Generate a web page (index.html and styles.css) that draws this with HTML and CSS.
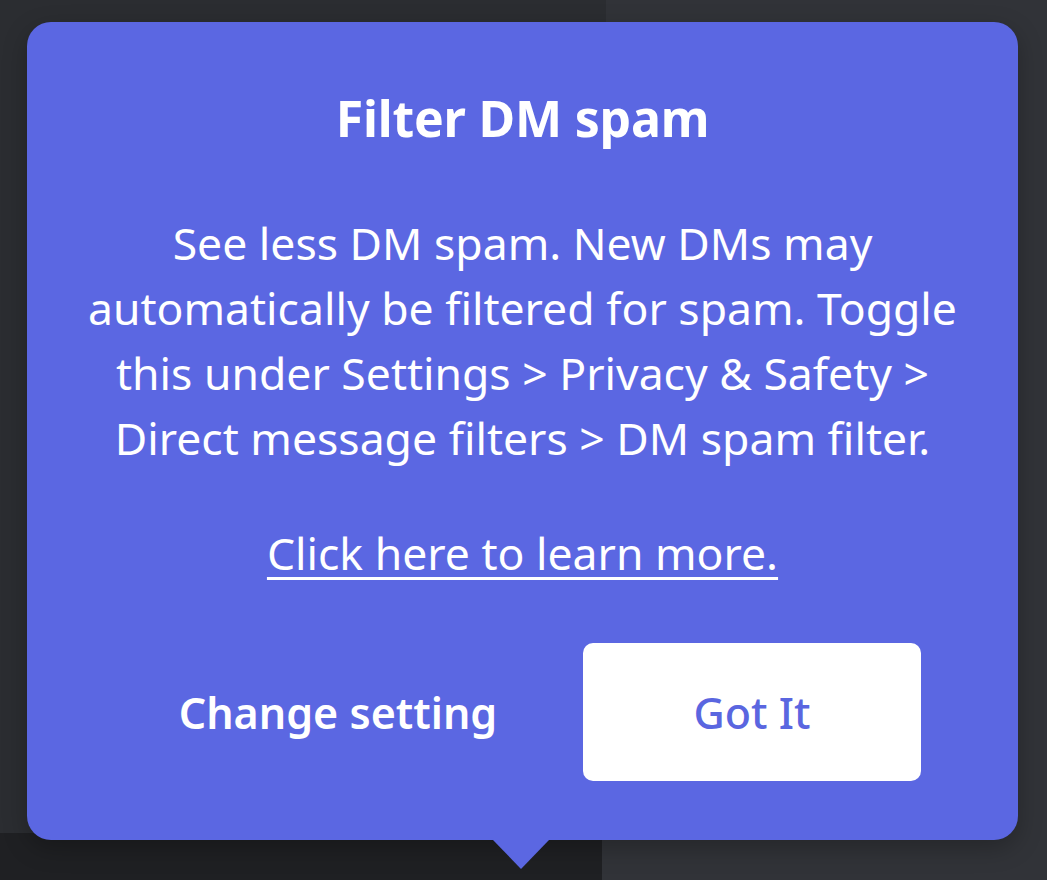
FILE: index.html
```html
<!DOCTYPE html>
<html lang="en">
<head>
<meta charset="utf-8">
<title>Filter DM spam</title>
<link rel="stylesheet" href="styles.css">
</head>
<body>
<div class="app">
  <div class="side">
    <div class="side-main"></div>
    <div class="side-foot"></div>
  </div>
  <div class="main"></div>
</div>
<div class="popout" role="dialog">
  <h1 class="title">Filter DM spam</h1>
  <p class="body">See less DM spam. New DMs may<br>automatically be filtered for spam. Toggle<br>this under Settings &gt; Privacy &amp; Safety &gt;<br>Direct message filters &gt; DM spam filter.</p>
  <a class="link" href="#">Click here to learn more.</a>
  <div class="actions">
    <button class="btn btn-text">Change setting</button>
    <button class="btn btn-white">Got It</button>
  </div>
  <div class="arrow"></div>
</div>
</body>
</html>
```
FILE: styles.css
```css
html, body {
  margin: 0;
  padding: 0;
  width: 1047px;
  height: 880px;
  overflow: hidden;
  background: #313338;
  font-family: "Noto Sans", "Open Sans", sans-serif;
}
.app {
  display: flex;
  height: 880px;
}
.side {
  width: 606px;
  display: flex;
  flex-direction: column;
}
.side-main {
  flex: 1;
  background: #2b2d31;
}
.side-foot {
  height: 47px;
  margin-right: 4px;
  background: #1f2023;
}
.main {
  flex: 1;
  background: #313338;
}
.popout {
  position: absolute;
  left: 27px;
  top: 22px;
  width: 991px;
  height: 818px;
  box-sizing: border-box;
  background: #5b67e2;
  border-radius: 24px;
  box-shadow: 0 8px 24px rgba(0,0,0,0.25);
  display: flex;
  flex-direction: column;
  align-items: center;
  padding-top: 66px;
  color: #fff;
  text-align: center;
}
.title {
  margin: 0;
  font-size: 50px;
  line-height: 60px;
  font-weight: 700;
  letter-spacing: -0.2px;
}
.body {
  margin: 62px 0 0;
  width: 960px;
  font-size: 44.5px;
  line-height: 65px;
  font-weight: 400;
}
.link {
  margin-top: 50px;
  color: #fff;
  font-size: 44.5px;
  line-height: 65px;
  text-decoration: underline;
  text-decoration-thickness: 3px;
  text-underline-offset: 7px;
}
.actions {
  margin-top: 58px;
  align-self: stretch;
  display: flex;
  gap: 76px;
  padding: 0 97px 0 142px;
}
.btn {
  width: 338px;
  height: 138px;
  border: 0;
  border-radius: 10px;
  font-family: inherit;
  font-size: 43px;
  font-weight: 600;
  cursor: pointer;
}
.btn-text {
  background: transparent;
  color: #fff;
}
.btn-white {
  background: #fff;
  color: #5a66e0;
  font-weight: 500;
}
.arrow {
  position: absolute;
  left: 466px;
  bottom: -29px;
  width: 0;
  height: 0;
  border-left: 28px solid transparent;
  border-right: 28px solid transparent;
  border-top: 29px solid #5b67e2;
}
```
